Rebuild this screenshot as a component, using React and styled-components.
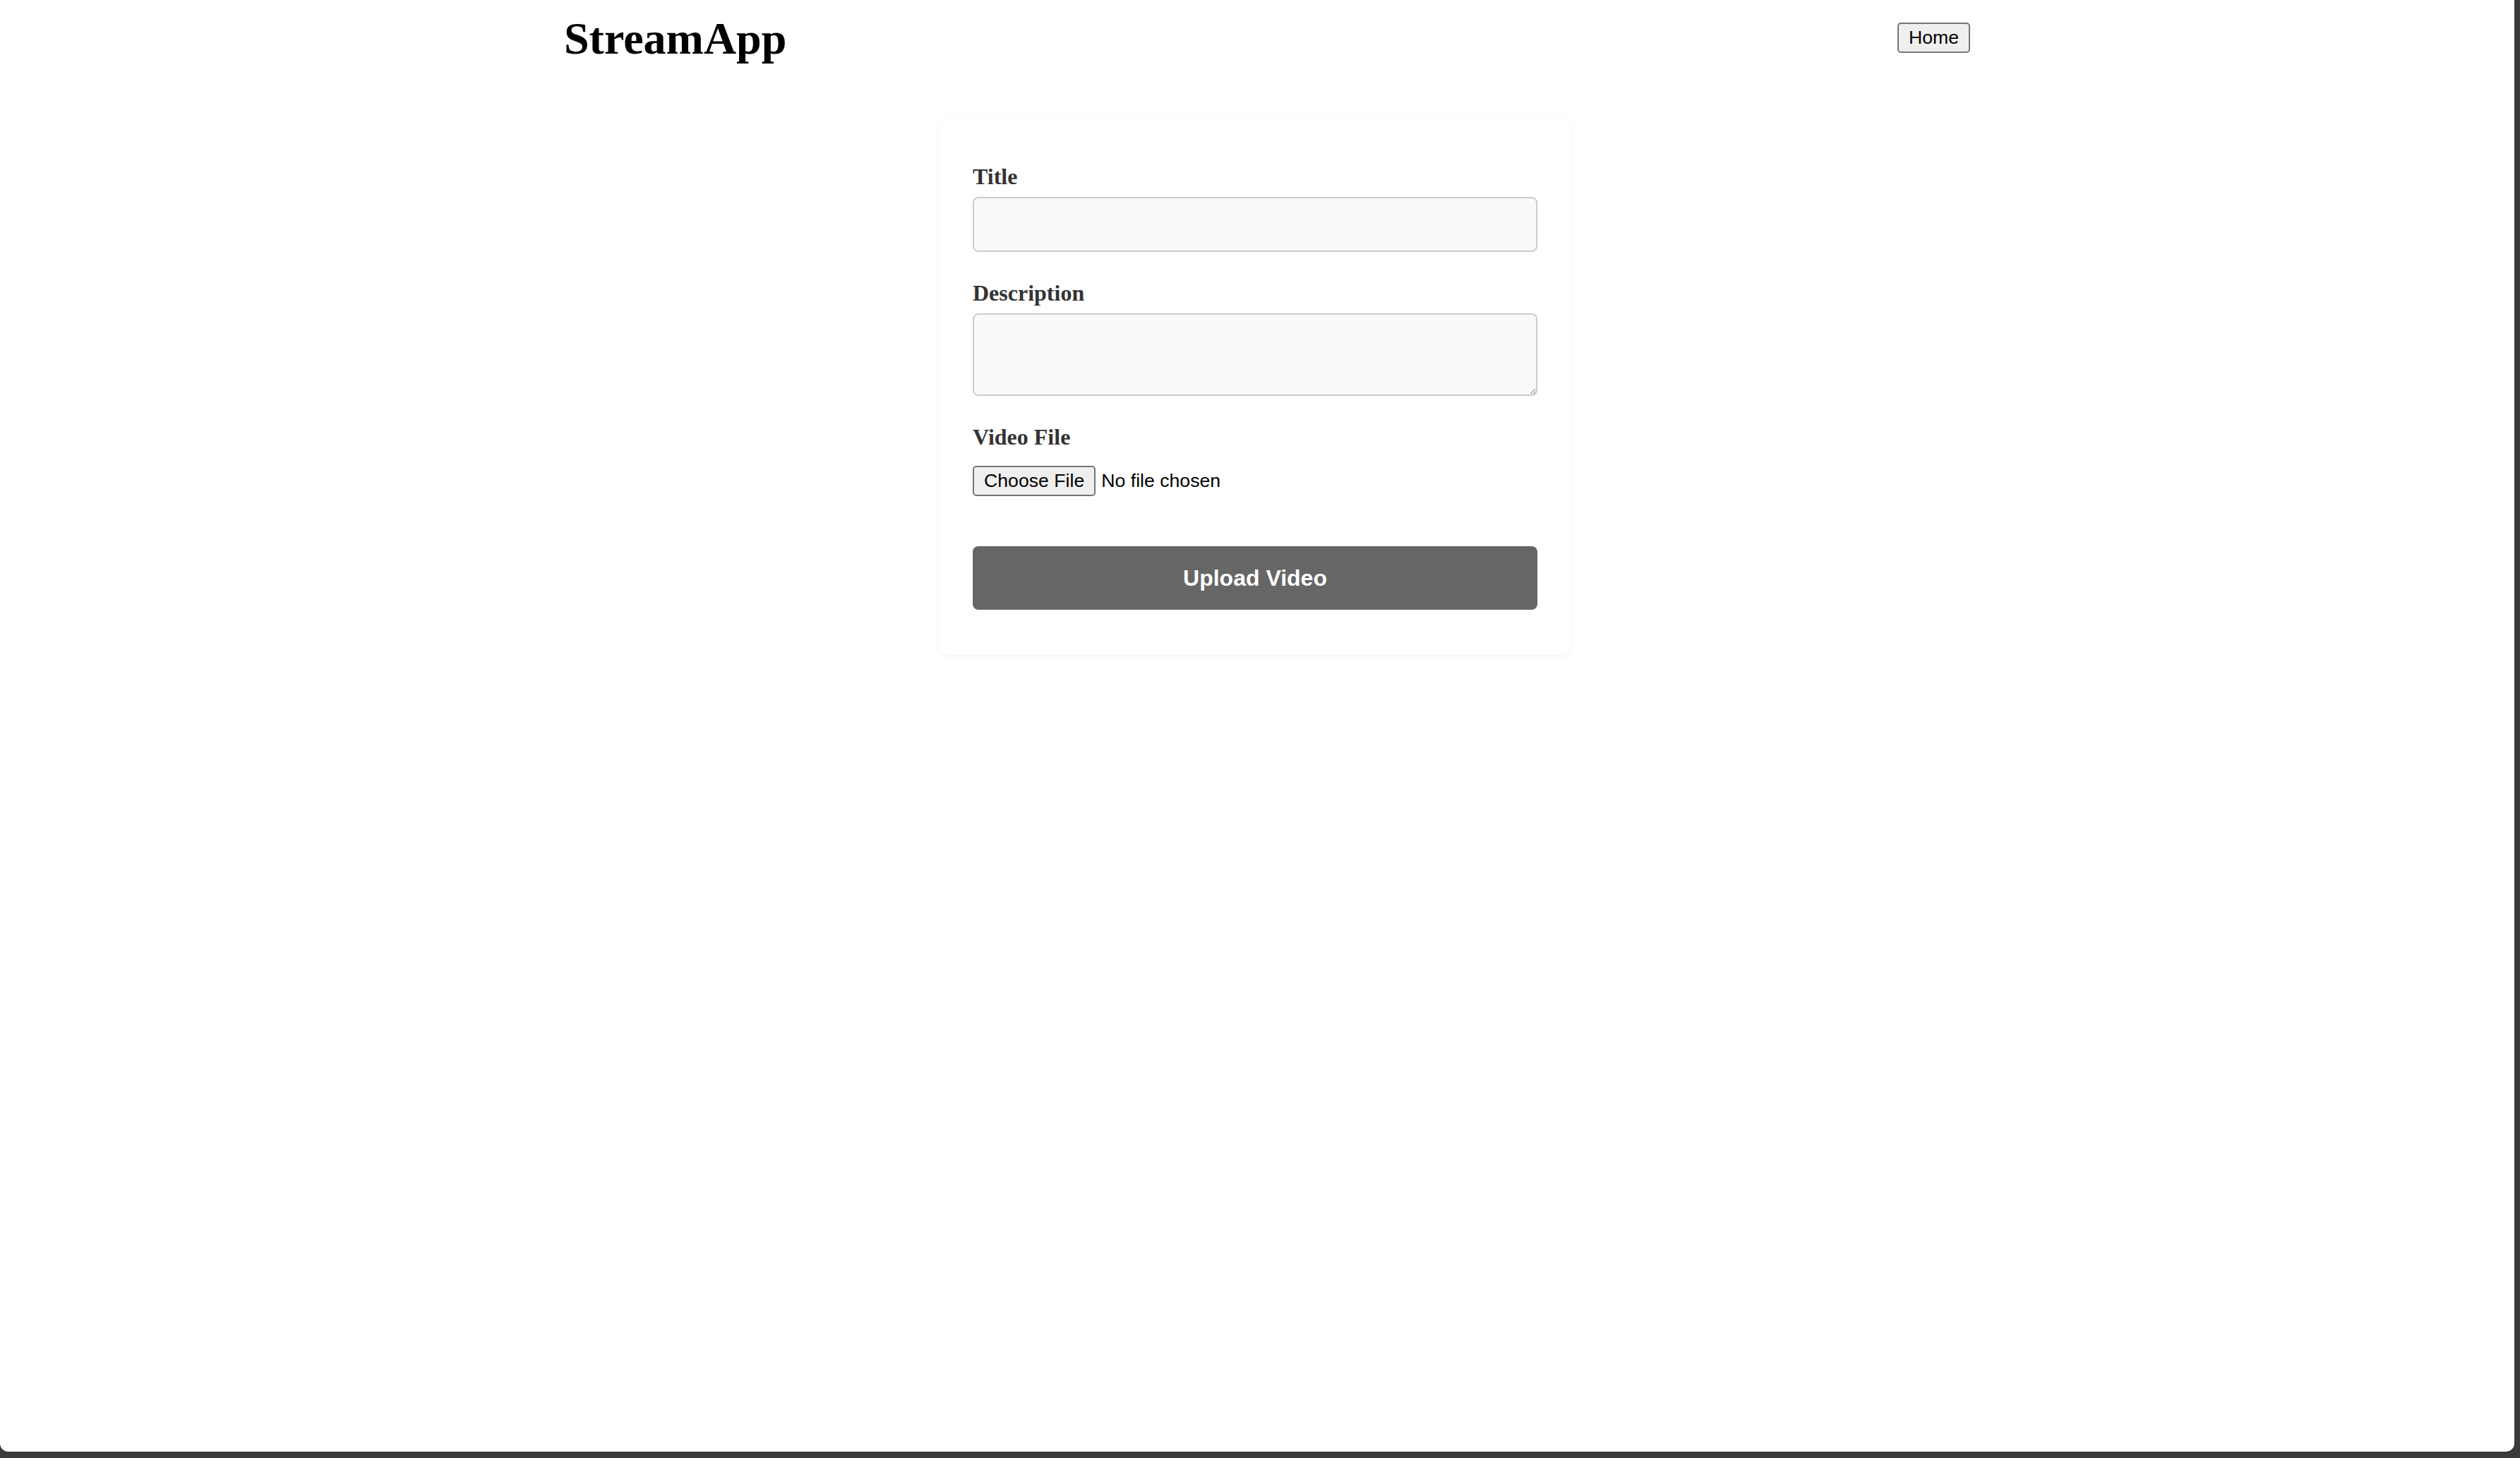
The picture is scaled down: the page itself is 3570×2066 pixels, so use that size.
import React from "react";
import styled, { createGlobalStyle } from "styled-components";

const GlobalStyle = createGlobalStyle`
    html, body {
        margin: 0;
        padding: 0;
        background: #3b3b3b;
        overflow: hidden;
    }
`;

const Frame = styled.div`
    width: 3562px;
    height: 2057px;
    background: #fff;
    border-radius: 0 0 12px 12px;
    overflow: hidden;
`;

const Page = styled.div`
    zoom: 2;
    padding: 8px;
    font-family: "Liberation Serif", "Times New Roman", serif;
`;

const Header = styled.header`
    display: flex;
    justify-content: space-between;
    align-items: center;
    width: 996px;
    margin-left: calc(50% - 491px);
    padding-top: 1px;
`;

const Logo = styled.h1`
    margin: 0;
    font-size: 32px;
    font-weight: bold;
    color: #000;
`;

const NavButton = styled.button`
    font-family: "Liberation Sans", Arial, sans-serif;
    font-size: 13.333px;
    margin-top: -2px;
`;

const Card = styled.form`
    width: 400px;
    margin: 38px 0 0 calc(50% - 225.5px);
    padding: 32px 24px 32px;
    background: #fff;
    border-radius: 8px;
    box-shadow: 0 1px 5px rgba(0, 0, 0, 0.05);
`;

const Group = styled.div`
    margin-bottom: 20px;
`;

const Label = styled.label`
    display: block;
    margin-bottom: 5px;
    font-size: 16px;
    font-weight: bold;
    color: #333;
`;

const TextInput = styled.input`
    display: block;
    box-sizing: border-box;
    width: 100%;
    height: 39px;
    padding: 10px;
    border: 1px solid #ccc;
    border-radius: 4px;
    background: #f9f9f9;
    font-family: "Liberation Sans", Arial, sans-serif;
    font-size: 14px;
    outline: none;
`;

const TextArea = styled.textarea`
    display: block;
    box-sizing: border-box;
    width: 100%;
    height: 58.5px;
    padding: 10px;
    border: 1px solid #ccc;
    border-radius: 4px;
    background: #f9f9f9;
    font-family: "Liberation Sans", Arial, sans-serif;
    font-size: 14px;
    outline: none;
`;

const FileInput = styled.input`
    display: block;
    margin-top: 11px;
    font-family: "Liberation Sans", Arial, sans-serif;
    font-size: 13.333px;
`;

const SubmitButton = styled.button`
    display: block;
    width: 100%;
    height: 45px;
    margin-top: 35.5px;
    border: none;
    border-radius: 4px;
    background: #666;
    color: #fff;
    font-family: "Liberation Sans", Arial, sans-serif;
    font-size: 16px;
    font-weight: bold;
    cursor: pointer;
`;

export default function App() {
    return (
        <>
            <GlobalStyle />
            <Frame>
                <Page>
                    <Header>
                        <Logo>StreamApp</Logo>
                        <NavButton>Home</NavButton>
                    </Header>
                    <Card onSubmit={e => e.preventDefault()}>
                        <Group>
                            <Label htmlFor="title">Title</Label>
                            <TextInput id="title" type="text" />
                        </Group>
                        <Group>
                            <Label htmlFor="description">Description</Label>
                            <TextArea id="description" />
                        </Group>
                        <div>
                            <Label htmlFor="video">Video File</Label>
                            <FileInput id="video" type="file" accept="video/*" />
                        </div>
                        <SubmitButton type="submit">Upload Video</SubmitButton>
                    </Card>
                </Page>
            </Frame>
        </>
    );
}
